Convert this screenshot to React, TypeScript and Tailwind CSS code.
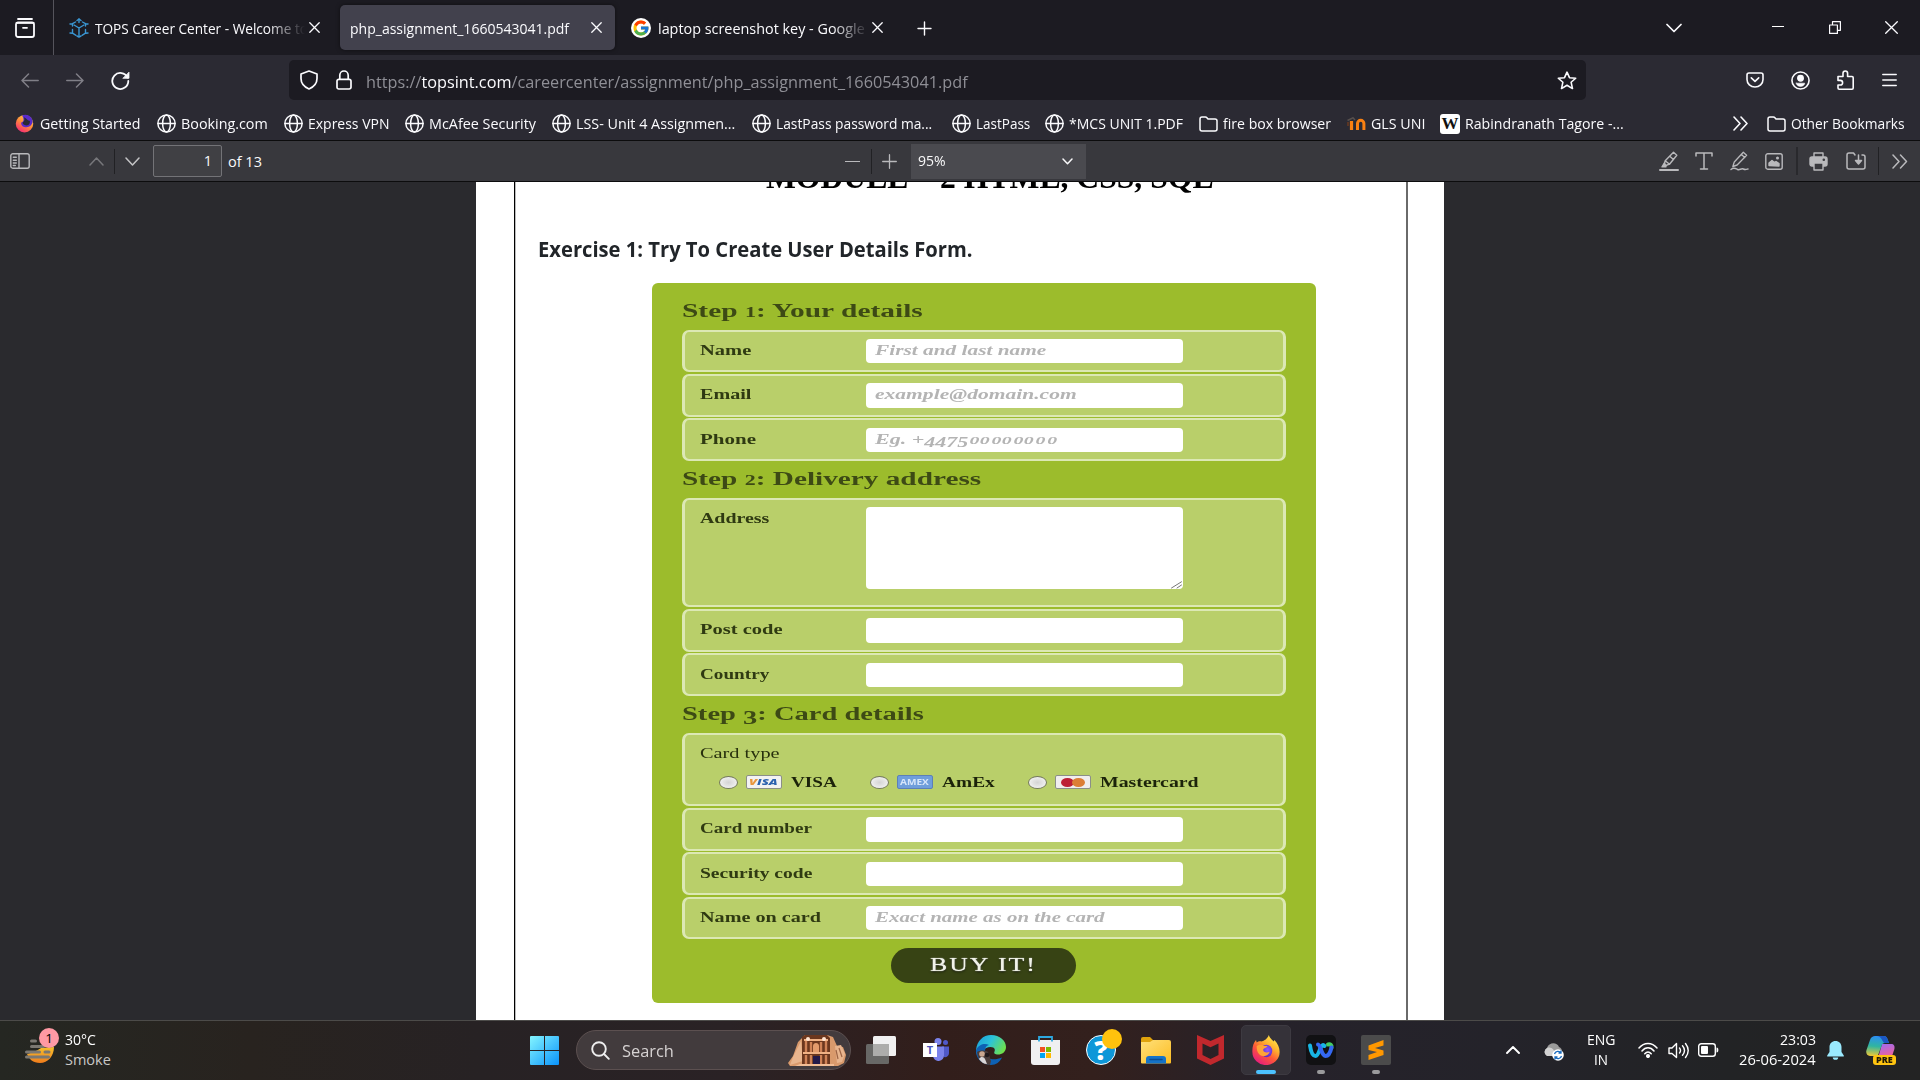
import { useLayoutEffect, useRef, type ReactNode } from "react";
import { FcGoogle } from "react-icons/fc";

/** Single line of text stretched or condensed to the width of its box. */
function Fit({ className = "", children }: { className?: string; children: ReactNode }) {
  const box = useRef<HTMLDivElement>(null);
  const text = useRef<HTMLSpanElement>(null);
  useLayoutEffect(() => {
    if (!box.current || !text.current) return;
    const k = box.current.clientWidth / text.current.offsetWidth;
    text.current.style.transform = `scaleX(${k})`;
  }, []);
  return (
    <div ref={box} className={`flex shrink-0 whitespace-nowrap ${className}`}>
      <span ref={text} className="block shrink-0 origin-left">
        {children}
      </span>
    </div>
  );
}

function Icon({
  className = "",
  box = "0 0 20 20",
  sw = 1.5,
  children,
}: {
  className?: string;
  box?: string;
  sw?: number;
  children: ReactNode;
}) {
  return (
    <svg
      viewBox={box}
      preserveAspectRatio="none"
      className={`shrink-0 ${className}`}
      fill="none"
      stroke="currentColor"
      strokeWidth={sw}
      strokeLinecap="round"
      strokeLinejoin="round"
    >
      {children}
    </svg>
  );
}

function Cross({ className = "" }: { className?: string }) {
  return (
    <Icon className={`h-[11px] w-[11px] ${className}`} box="0 0 11 11" sw={1.3}>
      <path d="M.8.8l9.4 9.4M10.2.8L.8 10.2" />
    </Icon>
  );
}

function Globe({ className = "" }: { className?: string }) {
  return (
    <Icon className={`h-[19px] w-[19px] ${className}`} box="0 0 19 19" sw={1.5}>
      <circle cx="9.5" cy="9.5" r="8.6" />
      <ellipse cx="9.5" cy="9.5" rx="3.9" ry="8.6" />
      <path d="M1 9.5h17" />
    </Icon>
  );
}

function Folder({ className = "" }: { className?: string }) {
  return (
    <Icon className={`h-[16px] w-[19px] ${className}`} box="0 0 19 16" sw={1.5}>
      <path d="M1 3a2 2 0 0 1 2-2h3.4a2 2 0 0 1 1.5.7L9 3h7a2 2 0 0 1 2 2v8a2 2 0 0 1-2 2H3a2 2 0 0 1-2-2z" />
    </Icon>
  );
}

function Firefox({ className = "", id }: { className?: string; id: string }) {
  return (
    <svg viewBox="0 0 30 30" preserveAspectRatio="none" className={`shrink-0 ${className}`}>
      <defs>
        <linearGradient id={id + "a"} x1="0.85" y1="0" x2="0.2" y2="1">
          <stop offset="0" stopColor="#fff44f" />
          <stop offset="0.35" stopColor="#ffb02e" />
          <stop offset="0.6" stopColor="#ff5a36" />
          <stop offset="1" stopColor="#e31587" />
        </linearGradient>
        <radialGradient id={id + "b"} cx="0.6" cy="0.4" r="0.6">
          <stop offset="0" stopColor="#9059ff" />
          <stop offset="1" stopColor="#5b2bc4" />
        </radialGradient>
      </defs>
      <path
        d="M18 0c1 3 3.500 4.800 5.300 6.500L24 5c3.700 3.500 5.600 7.500 5.600 12A14.500 13 0 0 1 .4 17C.2 12 1.500 8 4.300 5l.7 2.500C6.500 6.200 9 6 10.500 6.500 13 5.500 16.500 4 18 0z"
        fill={`url(#${id}a)`}
      />
      <circle cx="15.5" cy="16" r="6.2" fill={`url(#${id}b)`} />
      <path
        d="M5 11c3-2 6-1.500 7.500 0h4c0 1.800-4.500 2-4.500 4s3.500 3.600 7 1.800c-1.500 4.500-7.500 5.700-11 2.700C5.700 17.500 4.800 14 5 11z"
        fill="#ffa436"
      />
    </svg>
  );
}

function FirefoxSmall({ className = "" }: { className?: string }) {
  return (
    <svg viewBox="0 0 19 20" className={`shrink-0 ${className}`}>
      <defs>
        <linearGradient id="fs" x1="0.8" y1="0" x2="0.2" y2="1">
          <stop offset="0" stopColor="#ffd84a" />
          <stop offset="0.5" stopColor="#ff8a3c" />
          <stop offset="1" stopColor="#f5217a" />
        </linearGradient>
      </defs>
      <circle cx="9.500" cy="10.200" r="9.200" fill="url(#fs)" />
      <path d="M7 1.500C12-1 18 2.500 18 8c0 3-3 6-6.500 6S5.500 11.500 6 9c1.500-.5 2.500-1.500 2.500-3S8 3 7 1.500z" fill="#592acb" />
      <path d="M9 3.500c3 1 3.500 4 6 3.500.8 2-.5 5-3.500 5-2.500 0-4-1.500-4-3 1.500-.7 2.500-2 1.500-5.500z" fill="#2b2a33" />
    </svg>
  );
}

function TabBar() {
  return (
    <div className="flex h-[55px] items-center bg-[#1c1b22] text-[14.6px] text-[#fbfbfe]">
      <div className="flex h-full w-[54px] items-center border-r border-[#55545c] pl-[15px]">
        <Icon className="h-[20px] w-[20px]" sw={1.8}>
          <path d="M3 1h14M1.500 4.800h17" />
          <path d="M1 6.500a2 2 0 0 1 2-2h14a2 2 0 0 1 2 2V17a2 2 0 0 1-2 2H3a2 2 0 0 1-2-2z" />
          <path d="M8 9.800h4" />
        </Icon>
      </div>
      <Icon className="ml-[15px] h-[20px] w-[20px] text-[#3a96d2]" sw={1.4}>
        <path d="M10 1v3.500M10 10v8M10 10L5 7M10 10l5-3M3.500 11.500v3.700L7 17.300M16.500 11.500v3.700L13 17.300" />
        <path d="M6.500 4L3.500 5.700M13.500 4l3 1.700M8 2.500l2-1.500 2 1.500M1 6l2.500-.3V8M19 6l-2.500-.3V8M1 15l2.500.2M19 15l-2.500.2M8 18l2 1 2-1" />
      </Icon>
      <div className="mt-[2px] ml-[6px] flex w-[210px] overflow-hidden [mask-image:linear-gradient(to_right,black_82%,transparent)]">
        <Fit className="w-[213px]">TOPS Career Center - Welcome to</Fit>
      </div>
      <Cross className="ml-[4px]" />
      <div className="ml-[20px] flex h-[45px] w-[275px] items-center rounded-[5px] bg-[#42414d] pl-[10px] shadow-[0_0_4px_rgba(0,0,0,0.5)]">
        <Fit className="mt-[2px] w-[219px]">php_assignment_1660543041.pdf</Fit>
        <Cross className="ml-[22px]" />
      </div>
      <div className="ml-[16px] flex h-[20px] w-[20px] items-center justify-center rounded-full bg-white">
        <FcGoogle className="h-[18px] w-[18px]" />
      </div>
      <div className="mt-[2px] ml-[7px] flex w-[207px] overflow-hidden [mask-image:linear-gradient(to_right,black_84%,transparent_102%)]">
        <Fit className="w-[207px]">laptop screenshot key - Google</Fit>
      </div>
      <Cross className="ml-[7px]" />
      <Icon className="mt-px ml-[34px] h-[15px] w-[15px]" box="0 0 15 15" sw={1.4}>
        <path d="M7.500 1v13M1 7.500h13" />
      </Icon>
      <Icon className="ml-[734px] h-[10px] w-[16px]" box="0 0 16 10" sw={1.7}>
        <path d="M1 1.500l7 7 7-7" />
      </Icon>
      <div className="ml-[90px] mb-[2px] h-px w-[12px] bg-white" />
      <Icon className="ml-[45px] h-[13px] w-[12px]" box="0 0 12 13" sw={1.2}>
        <path d="M.6 4h7.800v8.400H.6zM3.500 4V.6h7.900v8.700H8.400" />
      </Icon>
      <Icon className="ml-[44px] h-[13px] w-[13px]" box="0 0 13 13" sw={1.3}>
        <path d="M.7.7l11.600 11.600M12.300.7L.7 12.300" />
      </Icon>
    </div>
  );
}

function NavBar() {
  return (
    <div className="flex h-[50px] items-center text-[#fbfbfe]">
      <Icon className="ml-[21px] h-[15px] w-[18px] text-[#807f87]" box="0 0 18 15" sw={1.5}>
        <path d="M17.200 7.500H1M7.500 1L1 7.500 7.500 14" />
      </Icon>
      <Icon className="ml-[27px] h-[15px] w-[18px] text-[#807f87]" box="0 0 18 15" sw={1.5}>
        <path d="M.8 7.500H17M10.500 1L17 7.500 10.500 14" />
      </Icon>
      <Icon className="ml-[27px] h-[19px] w-[19px]" box="0 0 19 19" sw={1.8}>
        <path d="M16.500 6.500A8 8 0 1 0 17.300 10" />
        <path d="M18 1.500v5.800h-5.800z" fill="currentColor" strokeWidth="0.8" />
      </Icon>
      <div className="ml-[159px] flex h-[40px] w-[1297px] items-center rounded-[5px] bg-[#1c1b22]">
        <Icon className="ml-[11px] h-[20px] w-[18px]" box="0 0 18 20" sw={1.700}>
          <path d="M9 1l8 3v4.500C17 13 13.500 17 9 19 4.500 17 1 13 1 8.500V4z" />
        </Icon>
        <Icon className="ml-[18px] h-[20px] w-[16px]" box="0 0 16 20" sw={1.7}>
          <path d="M1 11.200a1.800 1.800 0 0 1 1.800-1.800h10.400a1.800 1.800 0 0 1 1.800 1.800v6a1.800 1.800 0 0 1-1.800 1.800H2.800A1.800 1.800 0 0 1 1 17.200zM3.800 9V5.200a4.200 4.200 0 0 1 8.400 0V9" />
        </Icon>
        <Fit className="mt-[3px] ml-[14px] w-[602px] text-[16.500px] leading-[24px] text-[#8f8f96]">
          https://<span className="text-[#fbfbfe]">topsint.com</span>/careercenter/assignment/php_assignment_1660543041.pdf
        </Fit>
        <Icon className="ml-[589px] h-[19px] w-[20px]" sw={1.6}>
          <path d="M10 1.200l2.500 5.800 6.200.6-4.600 4.200 1.400 6.700L10 15l-5.500 3.500 1.400-6.700L1.300 7.600l6.200-.6z" />
        </Icon>
      </div>
      <Icon className="ml-[160px] h-[16px] w-[18px]" box="0 0 18 16" sw={1.6}>
        <path d="M3 1h12a2 2 0 0 1 2 2v4.500a8 7.500 0 0 1-16 0V3a2 2 0 0 1 2-2zM5.300 5.800L9 9.300l3.700-3.500" />
      </Icon>
      <Icon className="ml-[27px] h-[19px] w-[19px]" sw={1.700}>
        <circle cx="10" cy="10" r="9" />
        <circle cx="10" cy="7.700" r="2.800" fill="currentColor" />
        <path d="M5.500 12.800h9c-.5 2.500-2.500 3.400-4.500 3.400s-4-.9-4.500-3.400z" fill="currentColor" strokeWidth="0.6" />
      </Icon>
      <Icon className="ml-[27px] h-[20px] w-[17px]" box="0 0 17 20" sw={1.6}>
        <path d="M1 6.500h5V3.300a2.300 2.300 0 0 1 4.600 0v3.200H15a1.200 1.200 0 0 1 1.200 1.200V18A1.200 1.200 0 0 1 15 19.200H2.200A1.200 1.200 0 0 1 1 18v-3h2.300a2.300 2.300 0 0 0 0-4.600H1z" />
      </Icon>
      <Icon className="ml-[28px] h-[14px] w-[15px]" box="0 0 15 14" sw={1.5}>
        <path d="M.8 1.500h13.400M.8 7h13.400M.8 12.500h13.400" />
      </Icon>
    </div>
  );
}

function Bookmarks() {
  return (
    <div className="flex h-[35px] items-center pt-[2px] text-[14.5px] text-[#fbfbfe]">
      <FirefoxSmall className="ml-[15px] h-[19px] w-[19px]" />
      <Fit className="ml-[6px] w-[101px]">Getting Started</Fit>
      <Globe className="ml-[16px]" />
      <Fit className="ml-[5px] w-[87px]">Booking.com</Fit>
      <Globe className="ml-[16px]" />
      <Fit className="ml-[5px] w-[81px]">Express VPN</Fit>
      <Globe className="ml-[16px]" />
      <Fit className="ml-[5px] w-[107px]">McAfee Security</Fit>
      <Globe className="ml-[16px]" />
      <Fit className="ml-[5px] w-[159px]">LSS- Unit 4 Assignmen...</Fit>
      <Globe className="ml-[17px]" />
      <Fit className="ml-[5px] w-[156px]">LastPass password ma...</Fit>
      <Globe className="ml-[20px]" />
      <Fit className="ml-[5px] w-[54px]">LastPass</Fit>
      <Globe className="ml-[15px]" />
      <Fit className="ml-[5px] w-[114px]">*MCS UNIT 1.PDF</Fit>
      <Folder className="ml-[16px]" />
      <Fit className="ml-[5px] w-[108px]">fire box browser</Fit>
      <svg viewBox="0 0 19 13" className="ml-[16px] h-[13px] w-[19px] shrink-0" fill="none">
        <path d="M.5 3.500L6 .8 8 3" stroke="#57504d" strokeWidth="1.500" />
        <path d="M4.500 13V4" stroke="#f98012" strokeWidth="3.200" />
        <path d="M10.500 13V6.500a3.200 3.200 0 0 1 6.400 0V13" stroke="#f98012" strokeWidth="3" />
        <path d="M1 5v4" stroke="#6b3a20" strokeWidth="1.500" />
      </svg>
      <Fit className="ml-[5px] w-[54px]">GLS UNI</Fit>
      <div className="ml-[15px] flex h-[20px] w-[20px] shrink-0 items-center justify-center rounded-[3px] bg-white font-['Liberation_Serif',serif] text-[17px] font-bold text-[#111]">
        <Fit className="w-[17px] leading-[20px]">W</Fit>
      </div>
      <Fit className="ml-[5px] w-[159px]">Rabindranath Tagore -...</Fit>
      <Icon className="ml-[109px] h-[15px] w-[15px]" box="0 0 15 15" sw={1.600}>
        <path d="M1 1l6 6.500L1 14M8 1l6 6.500L8 14" />
      </Icon>
      <Folder className="ml-[19px]" />
      <Fit className="ml-[5px] w-[114px]">Other Bookmarks</Fit>
    </div>
  );
}

function PdfToolbar() {
  return (
    <div className="flex h-[42px] items-center border-y border-[#0c0c0d] bg-[#38383d] text-[14.5px] text-[#f9f9fa]">
      <Icon className="ml-[10px] h-[16px] w-[20px] text-[#b9b9bc]" box="0 0 20 16" sw={1.4}>
        <rect x=".8" y=".8" width="18.400" height="14.400" rx="2" />
        <path d="M9 1v14M3.300 4.300h3M3.300 7.200h3M3.300 10h3M3.300 12.500h2" />
      </Icon>
      <Icon className="ml-[59px] h-[9px] w-[15px] text-[#77777b]" box="0 0 15 9" sw={1.500}>
        <path d="M1 8l6.500-7L14 8" />
      </Icon>
      <div className="ml-[10px] h-[25px] w-px bg-[#212124]" />
      <Icon className="ml-[10px] h-[9px] w-[15px] text-[#c4c4c6]" box="0 0 15 9" sw={1.500}>
        <path d="M1 1l6.500 7L14 1" />
      </Icon>
      <div className="ml-[13px] flex h-[32px] w-[69px] items-center justify-end rounded-[2px] border border-[#737377] bg-[#404044] pr-[9px]">1</div>
      <Fit className="mt-px ml-[6px] w-[34px]">of 13</Fit>
      <div className="mt-px ml-[583px] h-px w-[15px] bg-[#b9b9bc]" />
      <div className="ml-[11px] h-[25px] w-px bg-[#212124]" />
      <Icon className="mt-px ml-[10px] h-[15px] w-[15px] text-[#b9b9bc]" box="0 0 15 15" sw={1.300}>
        <path d="M7.500.7v13.600M.7 7.500h13.600" />
      </Icon>
      <div className="ml-[14px] flex h-[35px] w-[175px] items-center bg-[#4a4a4f] pl-[7px]">
        <Fit className="w-[28px]">95%</Fit>
        <Icon className="ml-[116px] h-[7px] w-[11px]" box="0 0 11 7" sw={1.500}>
          <path d="M1 1l4.500 4.700L10 1" />
        </Icon>
      </div>
      <div className="ml-[573px] flex items-center text-[#b9b9bc]">
        <Icon className="h-[20px] w-[20px]" sw={1.400}>
          <path d="M1 19h18" strokeWidth="2" />
          <path d="M14.500 1.200l3.300 3-7.300 9-4.300-3.500zM6.200 9.700l-1 3.500 1.500 1.300 3.800-1.300M11 5.500l3.500 3" />
          <path d="M5.500 12L3 15.800h4z" fill="currentColor" />
        </Icon>
        <Icon className="ml-[16px] h-[18px] w-[18px]" box="0 0 18 18" sw={1.500}>
          <path d="M1 4V1h16v3M9 1v16M5.500 17h7" />
        </Icon>
        <Icon className="ml-[17px] h-[20px] w-[19px]" sw={1.400}>
          <path d="M14 1.300l3.500 3L7.500 14 3 15.500 4.500 11zM12 3.500l3.500 3M1 18.500c3-2.500 5-1 7 0s4-1.500 6-.5 3 .5 5 0" />
        </Icon>
        <Icon className="ml-[16px] h-[17px] w-[18px]" box="0 0 18 17" sw={1.400}>
          <rect x=".8" y=".8" width="16.400" height="15.400" rx="2" />
          <path d="M4 12.500V10l3-2.500 2.500 2 1.500-1 3 2v2.500z" fill="currentColor" />
          <circle cx="12.500" cy="5" r=".8" fill="currentColor" />
        </Icon>
        <div className="ml-[13px] h-[28px] w-[2px] bg-[#29292d]" />
        <Icon className="ml-[11px] h-[19px] w-[19px]" box="0 0 19 19" sw={1.400}>
          <path d="M5 5V1h9v4" />
          <rect x="1" y="5" width="17" height="9" rx="2" fill="currentColor" />
          <rect x="5" y="11" width="9" height="7" fill="#38383d" />
          <circle cx="14.800" cy="7.800" r=".6" stroke="#38383d" />
        </Icon>
        <Icon className="ml-[18px] h-[18px] w-[20px]" box="0 0 20 18" sw={1.500}>
          <path d="M9 3L7.500 1H3a2 2 0 0 0-2 2v12a2 2 0 0 0 2 2h14a2 2 0 0 0 2-2V5a2 2 0 0 0-2-2h-1M12.500 3v8" />
          <path d="M9.500 8.500h6l-3 3.500z" fill="currentColor" />
        </Icon>
        <div className="ml-[12px] h-[28px] w-px bg-[#212124]" />
        <Icon className="ml-[13px] h-[15px] w-[16px]" box="0 0 16 15" sw={1.500}>
          <path d="M1 1l6 6.500L1 14M8.500 1l6 6.500-6 6.500" />
        </Icon>
      </div>
    </div>
  );
}

/** Figures drawn old-style: 0, 1 and 2 at x-height, the others hanging below the line. */
function OldStyle({ text }: { text: string }) {
  return (
    <>
      {text.split("").map((c, i) =>
        c === "0" ? (
          <span key={i} className="inline-block scale-x-125 px-[0.1em] text-[0.72em]">{c}</span>
        ) : "12".includes(c) ? (
          <span key={i} className="text-[0.75em]">{c}</span>
        ) : "34579".includes(c) ? (
          <span key={i} className="relative top-[0.2em]">{c}</span>
        ) : (
          c
        ),
      )}
    </>
  );
}

function Step({ className, text }: { className: string; text: string }) {
  return (
    <Fit className={`h-[20px] text-[18.500px] leading-[20px] font-bold text-[#3d4a15] ${className}`}>
      <OldStyle text={text} />
    </Fit>
  );
}

const rowBox = "flex w-[604px] rounded-[7px] border-2 border-x-[3px] border-[#dce8b4] bg-[#b9cf6a] pl-[15.500px]";

function Row({
  label,
  labelWidth,
  hint,
  hintWidth = "",
  last = false,
}: {
  label: string;
  labelWidth: string;
  hint?: string;
  hintWidth?: string;
  last?: boolean;
}) {
  return (
    <div className={`${rowBox} h-[42.700px] ${last ? "" : "mb-[1.700px]"}`}>
      <div className="w-[165.500px] pt-[8.300px]">
        <Fit className={`text-[15px] leading-[20px] font-bold text-[#2f3a12] ${labelWidth}`}>{label}</Fit>
      </div>
      <div className="mt-[7.300px] h-[24.500px] w-[317px] rounded-[4px] bg-white pl-[9px]">
        {hint && (
          <Fit className={`h-[23px] text-[15px] leading-[23px] font-bold italic text-[#b4b4b4] ${hintWidth}`}>
            <OldStyle text={hint} />
          </Fit>
        )}
      </div>
    </div>
  );
}

function Radio() {
  return <div className="h-[13px] w-[19px] shrink-0 rounded-[50%] border-[1.500px] border-[#75795f] bg-[radial-gradient(#d4d4d4,#fafafa)]" />;
}

function PdfPage() {
  return (
    <div className="flex h-[838px] overflow-hidden bg-[#2a2a2e] pl-[476px]">
      <div className="flex w-[968px] bg-white pl-[38px]">
        <div className="h-full w-px bg-black" />
        <div className="h-full w-[893px] border-r-2 border-r-[#6a6a6a] border-l border-l-[#bbb]">
          <Fit className="-mt-[21.500px] ml-[250px] w-[448px] font-['Liberation_Serif',serif] text-[32px] leading-[32px] font-bold text-black">
            MODULE – 2 HTML, CSS, SQL
          </Fit>
          <Fit className="mt-[42px] ml-[22px] w-[435px] text-[20.500px] leading-[28px] font-bold text-[#212529]">
            Exercise 1: Try To Create User Details Form.
          </Fit>
          <div className="mt-[20px] ml-[136px] h-[720.500px] w-[663.500px] rounded-[6px] bg-[#9cbc2c] pt-[18px] pl-[29.800px] font-['Liberation_Serif',serif]">
            <Step className="mb-[9px] w-[240px]" text="Step 1: Your details" />
            <Row label="Name" labelWidth="w-[52px]" hint="First and last name" hintWidth="w-[172px]" />
            <Row label="Email" labelWidth="w-[51px]" hint="example@domain.com" hintWidth="w-[201px]" />
            <Row label="Phone" labelWidth="w-[56px]" hint="Eg. +447500000000" hintWidth="w-[182px]" last />
            <Step className="mt-[8px] mb-[9px] w-[299px]" text="Step 2: Delivery address" />
            <div className={`${rowBox} mb-[1.700px] h-[109.300px]`}>
              <div className="w-[165.500px] pt-[8.300px]">
                <Fit className="w-[69px] text-[15px] leading-[20px] font-bold text-[#2f3a12]">Address</Fit>
              </div>
              <div className="mt-[7px] flex h-[82px] w-[317px] items-end justify-end rounded-[4px] bg-white">
                <Icon className="h-[8px] w-[13px] text-[#777]" box="0 0 13 8" sw={1}>
                  <path d="M1.500 7L11.500.8M7 7l4.500-3" />
                </Icon>
              </div>
            </div>
            <Row label="Post code" labelWidth="w-[82px]" />
            <Row label="Country" labelWidth="w-[69px]" last />
            <Step className="mt-[8.500px] mb-[9px] w-[242px]" text="Step 3: Card details" />
            <div className={`${rowBox} mb-[1.700px] h-[72.700px] flex-col`}>
              <Fit className="mt-[8px] w-[80px] text-[15px] leading-[20px] text-[#27300d]">Card type</Fit>
              <div className="mt-[9px] flex items-center pl-[18.500px] text-[15px] leading-[20px] font-bold text-[#1c230a]">
                <Radio />
                <div className="ml-[8px] flex h-[14px] w-[36px] items-center justify-center rounded-[2px] border border-[#8b8f88] bg-[#f2f2f2] font-['Open_Sans',sans-serif] text-[9px] font-extrabold italic text-[#2c62ae]">
                  <Fit className="w-[29px] leading-[12px]"><span className="text-[#e9963c]">V</span>ISA</Fit>
                </div>
                <Fit className="ml-[9px] w-[46px]">VISA</Fit>
                <div className="ml-[33px]"><Radio /></div>
                <div className="ml-[8px] flex h-[14px] w-[36px] items-center justify-center rounded-[2px] border border-[#5c80b8] bg-[#6f9edb] font-['Open_Sans',sans-serif] text-[8px] font-bold text-[#d7e6fa]">
                  <Fit className="w-[29px] leading-[12px]">AMEX</Fit>
                </div>
                <Fit className="ml-[9px] w-[53px]">AmEx</Fit>
                <div className="ml-[33px]"><Radio /></div>
                <div className="ml-[8px] flex h-[14px] w-[36px] items-center justify-center rounded-[2px] border border-[#8b8f88] bg-[#f0eeee]">
                  <div className="h-[9px] w-[13px] rounded-[50%] bg-[#bd1f35]" />
                  <div className="-ml-[2px] h-[9px] w-[13px] rounded-[50%] bg-[#dc7e35]" />
                </div>
                <Fit className="ml-[9px] w-[99px]">Mastercard</Fit>
              </div>
            </div>
            <Row label="Card number" labelWidth="w-[112px]" />
            <Row label="Security code" labelWidth="w-[112px]" />
            <Row label="Name on card" labelWidth="w-[121px]" hint="Exact name as on the card" hintWidth="w-[230px]" last />
            <div className="mt-[9px] ml-[209px] flex h-[34.500px] w-[185px] justify-center rounded-full bg-[#374314] pt-[7px]">
              <Fit className="w-[107px] text-[19px] leading-[20px] tracking-[1.500px] text-[#f1f3e8] [text-shadow:0_0_1px_#fff,0_1px_2px_#000]">BUY IT!</Fit>
            </div>
          </div>
        </div>
      </div>
    </div>
  );
}

function Petra() {
  return (
    <svg viewBox="0 0 60 33" className="h-[33px] w-[60px] shrink-0">
      <path d="M1 29l5-7 5-14 7-7h22l6 2 4 9 6 1 3 8-2 8-6 3H3z" fill="#d99a6c" />
      <path d="M3 31l3-8 8-16 2 20zM48 12l6-1 4 9-3 8-5 1z" fill="#e8b58e" />
      <path d="M15 3l3-2h22l3 3v27H15z" fill="#6b371e" />
      <path d="M17 6h24M16 19h27" stroke="#f0b184" strokeWidth="2" />
      <path d="M19 7v11M24 8v10M34 8v10M39 7v11M19 21v9M24 21v9M34 21v9M39 21v9" stroke="#cf8256" strokeWidth="2.400" />
      <path d="M26 12c0-4 6-4 6 0v6h-6z" fill="#e39b6c" />
      <path d="M26 22h7v8h-7z" fill="#231a4a" />
      <circle cx="21" cy="5" r="2" fill="#ffe4d0" />
      <circle cx="37" cy="5" r="2" fill="#ffe4d0" />
      <path d="M13 30h34v2H8z" fill="#f1bd95" />
      <path d="M52 14l3 9M49 16l2 9" stroke="#9d6444" strokeWidth="1.200" />
    </svg>
  );
}

function Taskbar() {
  return (
    <div className="flex h-[60px] items-center border-t border-[#4c4b49] bg-[linear-gradient(90deg,#252722_0%,#28231f_13%,#272224_25%,#2a2225_38%,#321e1b_49%,#33201d_57%,#26222a_66%,#24232a_78%,#222325_90%,#232323_100%)] pb-px text-white">
      <div className="flex w-[530px] items-center pl-[25px]">
        <div className="relative h-[28px] w-[34px]">
          <svg viewBox="0 0 34 28" className="h-[28px] w-[34px]">
            <defs>
              <linearGradient id="sun" x1="0" y1="0" x2="0" y2="1">
                <stop offset="0" stopColor="#f6c12d" />
                <stop offset="1" stopColor="#f07c1c" />
              </linearGradient>
            </defs>
            <path d="M2 18c2 0 12-4 14-6l13-1c0 9-6 16-14 16C8 27 4 23 2 18z" fill="url(#sun)" />
            <path d="M6.500 5h4M6.500 10.500h12M1.500 16h13M20 16h4M1.500 21h22" stroke="#7b7872" strokeWidth="3" strokeLinecap="round" />
          </svg>
          <div className="absolute -top-[8px] left-[14px] flex h-[20px] w-[20px] items-center justify-center rounded-full bg-[#ff99a4] text-[13.500px] text-black">1</div>
        </div>
        <div className="ml-[6px] text-[14.500px] leading-[20px]">
          <Fit className="w-[31px]">30°C</Fit>
          <Fit className="w-[46px] text-[#c9c8c6]">Smoke</Fit>
        </div>
      </div>
      <svg viewBox="0 0 29 29" className="h-[29px] w-[29px] shrink-0">
        <defs>
          <linearGradient id="win" x1="0" y1="0" x2="1" y2="1">
            <stop offset="0" stopColor="#84f5ff" />
            <stop offset="1" stopColor="#0a93fb" />
          </linearGradient>
        </defs>
        <path d="M0 1a1 1 0 0 1 1-1h13v14H0zM15 0h13a1 1 0 0 1 1 1v13H15zM0 15h14v14H1a1 1 0 0 1-1-1zM15 15h14v13a1 1 0 0 1-1 1H15z" fill="url(#win)" />
      </svg>
      <div className="ml-[17px] flex h-[40px] w-[275px] items-center rounded-full border border-[#5c5050] bg-[#423b3d] pl-[14px]">
        <Icon className="h-[19px] w-[19px] text-[#eee]" box="0 0 19 19" sw={1.900}>
          <circle cx="8" cy="8" r="6.800" />
          <path d="M13 13l4.800 4.800" />
        </Icon>
        <Fit className="mt-px ml-[12px] w-[52px] text-[17px] text-[#d6d2d2]">Search</Fit>
        <div className="ml-[113px] pt-px"><Petra /></div>
      </div>
      <svg viewBox="0 0 30 28" className="ml-[15px] h-[28px] w-[30px] shrink-0">
        <rect x="0" y="8" width="23" height="20" rx="1.500" fill="#686866" />
        <rect x="7" y="0" width="23" height="20" rx="1.500" fill="#f1f1f1" />
        <path d="M7 8h16v12H7z" fill="#adadab" />
      </svg>
      <div className="relative ml-[27px] mb-[2px] h-[23px] w-[26px]">
        <svg viewBox="0 0 26 23" className="h-[23px] w-[26px]">
          <circle cx="22.500" cy="4.500" r="2.500" fill="#5059c9" />
          <path d="M19 8.500h7V15a4 4 0 0 1-5 4z" fill="#5059c9" />
          <circle cx="15" cy="3.500" r="3.500" fill="#7b83eb" />
          <path d="M10 8.500h11V17a5.500 5.500 0 0 1-11 1z" fill="#7b83eb" />
        </svg>
        <div className="absolute top-[5px] left-0 flex h-[14px] w-[14px] items-center justify-center bg-white text-[11px] leading-[14px] font-bold text-[#4b53bc]">T</div>
      </div>
      <svg viewBox="0 0 30 30" className="ml-[27px] h-[30px] w-[30px] shrink-0">
        <defs>
          <linearGradient id="edge" x1="0" y1="0" x2="1" y2="0.500">
            <stop offset="0" stopColor="#199bdc" />
            <stop offset="0.500" stopColor="#2cc3d8" />
            <stop offset="1" stopColor="#6fe04b" />
          </linearGradient>
        </defs>
        <path d="M0 15C1 6 7 0 15 0c9 0 15 6 15 12 0 5-4 7.500-8 7.500-3 0-4.500-1-3.500-3 .8-1.500.6-4.500-4-4.500C8 12 4 18 5 24 2 22 0 19 0 15z" fill="url(#edge)" />
        <path d="M0 15c3-6 9-7 13-5-4 1-4.500 5-3.500 9 1.500 5 8 7 16.500 3.500C24 27 20 30 15 30 7 30-.5 24 0 15z" fill="#0e61b4" />
        <path d="M1 17c3-2 8-2 11 0l3 9-1 4C8 30 2 26 1 17z" fill="#4a3c3a" />
        <circle cx="6" cy="19" r="2.800" fill="#c9a790" />
        <circle cx="11" cy="20" r="2.300" fill="#20191b" />
        <path d="M3 24c2-3 5-2 6 0l2 5c-3 0-6-2-8-5z" fill="#d9d6d8" />
      </svg>
      <svg viewBox="0 0 29 29" className="ml-[25px] h-[29px] w-[29px] shrink-0">
        <path d="M0 4h29v22a3 3 0 0 1-3 3H3a3 3 0 0 1-3-3z" fill="#f0f0f1" />
        <path d="M9 11h5v5H9z" fill="#f25022" />
        <path d="M15 11h5v5h-5z" fill="#7fba00" />
        <path d="M9 17h5v5H9z" fill="#00a4ef" />
        <path d="M15 17h5v5h-5z" fill="#ffb900" />
        <path d="M8 5.500V1h13v4.500" fill="none" stroke="#2da8e0" strokeWidth="1.800" />
      </svg>
      <div className="relative ml-[26px] h-[30px] w-[30px]">
        <div className="flex h-[30px] w-[30px] items-center justify-center rounded-full border-[1.500px] border-white bg-[#0e97d8] text-[27px] leading-[28px] font-extrabold">?</div>
        <div className="absolute -top-[6px] left-[16px] h-[20px] w-[20px] rounded-full bg-[#ffc20d]" />
      </div>
      <svg viewBox="0 0 30 27" className="ml-[25px] h-[27px] w-[30px] shrink-0">
        <defs>
          <linearGradient id="fold" x1="0" y1="0" x2="1" y2="1">
            <stop offset="0" stopColor="#ffe07a" />
            <stop offset="1" stopColor="#fcbd23" />
          </linearGradient>
        </defs>
        <path d="M0 2a2 2 0 0 1 2-2h7l3 3v4H0z" fill="#e0a30c" />
        <path d="M0 5h9l3-2h16a2 2 0 0 1 2 2v20.500a1 1 0 0 1-1 1H1a1 1 0 0 1-1-1z" fill="url(#fold)" />
        <path d="M5 26.500V22a3 3 0 0 1 3-3h14a3 3 0 0 1 3 3v4.500z" fill="#1573c7" />
        <path d="M9 22.500h12" stroke="#0b4c91" strokeWidth="1.500" strokeLinecap="round" />
      </svg>
      <svg viewBox="0 0 27 30" className="ml-[26px] h-[30px] w-[27px] shrink-0">
        <path d="M0 0l13.500 6L27 0v23.500L13.500 30 0 23.500zM5.500 8.500v11.500l8 4 8-4V8.500l-8 3.800z" fill="#c1282d" fillRule="evenodd" />
      </svg>
      <div className="ml-[17px] flex h-[50px] w-[50px] flex-col items-center rounded-[5px] border border-[#3d3a41] bg-[#353239] pt-[9px]">
        <Firefox id="ff" className="h-[30px] w-[28px]" />
        <div className="mt-[5px] h-[4px] w-[20px] shrink-0 rounded-full bg-[#4cc2ff]" />
      </div>
      <div className="ml-[15px] flex h-[50px] w-[30px] flex-col items-center pt-[10px]">
        <svg viewBox="0 0 30 30" className="h-[30px] w-[30px] shrink-0">
          <rect width="30" height="30" rx="5" fill="#111113" />
          <path d="M4 10.500c1 7 3 10.500 5.500 10.500s4-5.500 5-8 2.500-4 4-2" fill="none" stroke="#18b6e4" strokeWidth="4" strokeLinecap="round" />
          <path d="M22 9.500c2.500-.5 4 .5 3.500 3" fill="none" stroke="#45cc62" strokeWidth="4" strokeLinecap="round" />
          <path d="M12 9.500c2.500 0 3.500 11.500 7.500 11.500 3 0 5-4 6-8.500" fill="none" stroke="#3568f2" strokeWidth="4" strokeLinecap="round" />
        </svg>
        <div className="mt-[5px] h-[4px] w-[8px] shrink-0 rounded-full bg-[#9a9a9c]" />
      </div>
      <div className="ml-[25px] flex h-[50px] w-[30px] flex-col items-center pt-[10px]">
        <svg viewBox="0 0 30 30" className="h-[30px] w-[30px] shrink-0">
          <rect width="30" height="30" rx="2" fill="#4b4b4b" />
          <path d="M7.500 10.500L22.500 5v5.500L14 13l8.500 2.500V20L7.500 25v-5l8.500-3-8.500-2z" fill="#ff9800" />
        </svg>
        <div className="mt-[5px] h-[4px] w-[8px] shrink-0 rounded-full bg-[#9a9a9c]" />
      </div>
      <Icon className="ml-[115px] h-[8px] w-[14px]" box="0 0 14 8" sw={1.900}>
        <path d="M1 7l6-6 6 6" />
      </Icon>
      <svg viewBox="0 0 21 18" className="mt-[3px] ml-[23px] h-[18px] w-[21px] shrink-0">
        <path d="M4 13a4.500 4.500 0 0 1 0-8C6-1 14-1 16 4c4 1 4 8 0 9z" fill="#9b9b9b" />
        <path d="M4 13a4.500 4.500 0 0 1 0-8c4-1.500 8 1 8 8z" fill="#d2d2d2" />
        <circle cx="15" cy="12" r="5.800" fill="#fff" />
        <path d="M11.500 11a3.600 3.600 0 0 1 6.500-1M18.500 13a3.600 3.600 0 0 1-6.500 1M18 7.500V10h-2.500M12 16.500V14h2.500" fill="none" stroke="#1769bd" strokeWidth="1.300" />
      </svg>
      <div className="ml-[22px] flex w-[30px] flex-col items-center text-[14.500px] leading-[20px]">
        <Fit className="w-[29px]">ENG</Fit>
        <Fit className="w-[14px]">IN</Fit>
      </div>
      <Icon className="ml-[22px] h-[16px] w-[20px]" box="0 0 20 16" sw={1.500}>
        <path d="M1 6c5-6 13-6 18 0M4 9c3.500-4.200 8.500-4.200 12 0M6.800 11.800c2-2.400 4.400-2.400 6.400 0" />
        <circle cx="10" cy="14" r="1.300" fill="currentColor" />
      </Icon>
      <Icon className="ml-[10px] h-[17px] w-[21px]" box="0 0 21 17" sw={1.400}>
        <path d="M1 6h3l4.500-4.500v14L4 11.500H1zM11.500 6c1.200 1.500 1.200 3.500 0 5M14.500 3.800c2.400 2.800 2.400 6.600 0 9.400M17.500 1.500c3.500 4.500 3.500 9.500 0 14" />
      </Icon>
      <svg viewBox="0 0 21 14" className="ml-[9px] h-[14px] w-[21px] shrink-0" fill="none">
        <rect x=".7" y=".7" width="16.600" height="12.600" rx="2.500" stroke="#fff" strokeWidth="1.400" />
        <rect x="3" y="3" width="7" height="8" rx="1" fill="#fff" />
        <path d="M18.500 4.500c1.500 0 1.800 1 1.800 2.500s-.3 2.500-1.800 2.500z" fill="#fff" />
      </svg>
      <div className="ml-[20px] flex w-[77px] flex-col items-end text-[14.500px] leading-[20px]">
        <Fit className="w-[36px]">23:03</Fit>
        <Fit className="w-[77px]">26-06-2024</Fit>
      </div>
      <svg viewBox="0 0 17 19" className="ml-[11px] h-[19px] w-[17px] shrink-0">
        <path d="M8.500 0C12 0 14.500 2.600 14.500 6v5l2.300 3.500v1H.2v-1L2.500 11V6C2.500 2.600 5 0 8.500 0zM5.800 16.500h5.400a2.700 2.300 0 0 1-5.400 0z" fill="#9aeafe" />
      </svg>
      <div className="relative ml-[22px] h-[29px] w-[30px]">
        <svg viewBox="0 0 30 29" className="h-[29px] w-[30px]">
          <defs>
            <linearGradient id="cpa" x1="0.300" y1="0" x2="0.200" y2="1">
              <stop offset="0" stopColor="#2c8ff0" />
              <stop offset="0.500" stopColor="#2fb5a0" />
              <stop offset="1" stopColor="#f1c935" />
            </linearGradient>
            <linearGradient id="cpb" x1="0" y1="0" x2="0.300" y2="1">
              <stop offset="0" stopColor="#9a6cf5" />
              <stop offset="1" stopColor="#f0629a" />
            </linearGradient>
          </defs>
          <path d="M16 8h9c3 0 4 2 3.400 5l-2 6c-.6 2-2 3-4 3H12z" fill="url(#cpb)" />
          <path d="M9 0h9c3 0 3.500 3 5 7h-4c-2 0-3 1-3.500 3l-3 8c-.5 2-2 2-4 2H4c-3 0-4.500-3-3.500-6L4 4c1-3 3-4 5-4z" fill="url(#cpa)" />
          <path d="M11 0h7c3 0 3.500 3 5 7h-4c-3 0-2-6-8-7z" fill="#1b58c4" />
        </svg>
        <div className="absolute top-[19px] left-[7px] flex h-[10px] w-[23px] items-center justify-center rounded-[3px] bg-[#ffc410] text-[8.500px] leading-[10px] font-extrabold text-[#201a05]">
          <Fit className="w-[17px]">PRE</Fit>
        </div>
      </div>
    </div>
  );
}

export default function App() {
  return (
    <div className="flex h-[1080px] w-[1920px] flex-col overflow-hidden bg-[#2b2a33] font-['Open_Sans','Noto_Sans',sans-serif]">
      <TabBar />
      <NavBar />
      <Bookmarks />
      <PdfToolbar />
      <PdfPage />
      <Taskbar />
    </div>
  );
}
